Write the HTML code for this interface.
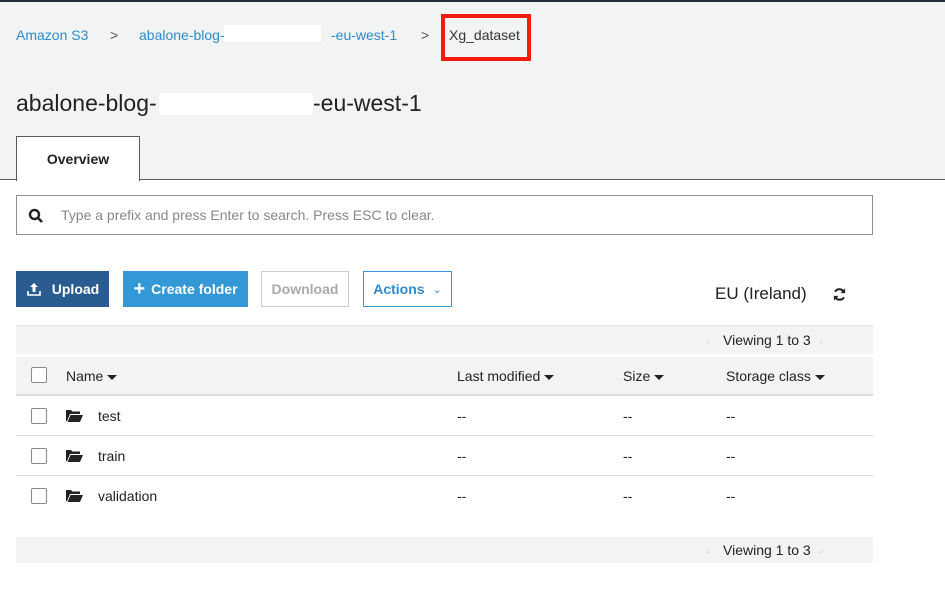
<!DOCTYPE html>
<html><head><meta charset="utf-8"><style>
*{margin:0;padding:0;box-sizing:border-box}
body{width:945px;height:613px;background:#fff;font-family:"Liberation Sans",Arial,sans-serif;position:relative;overflow:hidden;color:#222}
.a{position:absolute}
.hdr{left:0;top:0;width:945px;height:180px;background:#f2f3f3;border-top:2px solid #232f3e;border-bottom:1px solid #545b64}
.bc{top:27px;font-size:14px;color:#2e8ccb}
.white{background:#fff}
.btn{height:36px;top:271px;font-size:14px;font-weight:bold;display:flex;align-items:center;justify-content:center}
.cb{width:16px;height:16px;border:1px solid #8a8a8a;border-radius:2px;background:#fff;left:31px}
.txt{font-size:14px;color:#222}
.hrow{font-size:14px;color:#222}
.tri{display:inline-block;width:0;height:0;border-left:5px solid transparent;border-right:5px solid transparent;border-top:5px solid #222;vertical-align:middle;margin-left:4px}
.line{left:16px;width:857px;height:1px;background:#ddd}
</style></head><body>
<div class="a hdr"></div>
<div class="a bc" style="left:16px">Amazon S3</div>
<div class="a bc" style="left:110px;color:#555">&gt;</div>
<div class="a bc" style="left:139px">abalone-blog-</div>
<div class="a white" style="left:224px;top:25px;width:97px;height:17px"></div>
<div class="a bc" style="left:331px">-eu-west-1</div>
<div class="a bc" style="left:421px;color:#555">&gt;</div>
<div class="a bc" style="left:449px;color:#333">Xg_dataset</div>
<div class="a" style="left:441px;top:14px;width:90px;height:47px;border:4px solid #f21b0c"></div>
<div class="a" style="left:16px;top:90px;font-size:23px;color:#222">abalone-blog-</div>
<div class="a white" style="left:159px;top:93px;width:154px;height:22px"></div>
<div class="a" style="left:313px;top:90px;font-size:23px;color:#222">-eu-west-1</div>
<div class="a" style="left:16px;top:136px;width:124px;height:45px;background:#fff;border:1px solid #545b64;border-bottom:none;font-size:14px;font-weight:bold;text-align:center;line-height:44px">Overview</div>
<div class="a" style="left:16px;top:195px;width:857px;height:40px;border:1px solid #8d9096;background:#fff"></div>
<svg class="a" style="left:28px;top:208px" width="16" height="16" viewBox="0 0 16 16"><circle cx="6.5" cy="6.5" r="4.5" fill="none" stroke="#222" stroke-width="2.4"/><path d="M10 10l4 4" stroke="#222" stroke-width="2.6"/></svg>
<div class="a" style="left:61px;top:207px;font-size:14px;color:#888">Type a prefix and press Enter to search. Press ESC to clear.</div>
<div class="a btn" style="left:16px;width:93px;background:#2b5c91;color:#fff"><svg width="16" height="16" viewBox="0 0 16 16" style="margin-right:10px"><path d="M8 2l-4 4h2.5v5h3V6H12z" fill="#fff"/><path d="M2 10v4h12v-4" fill="none" stroke="#fff" stroke-width="1.6"/></svg>Upload</div>
<div class="a btn" style="left:123px;width:125px;background:#3399d6;color:#fff"><span style="font-size:20px;margin-right:6px;font-weight:bold">+</span>Create folder</div>
<div class="a btn" style="left:261px;width:88px;border:1px solid #ccc;color:#aaa;background:#fff">Download</div>
<div class="a btn" style="left:363px;width:89px;border:1px solid #3199d6;color:#2e8ccb;background:#fff">Actions<span style="font-weight:normal;font-size:11px;margin-left:8px">&#8964;</span></div>
<div class="a" style="left:715px;top:284px;font-size:17px;color:#222">EU (Ireland)</div>
<svg class="a" style="left:832px;top:287px" width="15" height="15" viewBox="0 0 16 16"><path d="M13 6A5.5 5.5 0 0 0 3.2 5M3 10a5.5 5.5 0 0 0 9.8 1" fill="none" stroke="#222" stroke-width="2.2"/><path d="M14 1.5v5h-5z M2 14.5v-5h5z" fill="#222"/></svg>
<div class="a" style="left:16px;top:325px;width:857px;height:29px;background:#f2f3f3;border-top:1px solid #e0e0e0"></div>
<div class="a" style="left:706px;top:332px;font-size:14px;color:#ddd">&lsaquo;</div>
<div class="a txt" style="left:723px;top:332px">Viewing 1 to 3</div>
<div class="a" style="left:819px;top:332px;font-size:14px;color:#ddd">&rsaquo;</div>
<div class="a" style="left:16px;top:357px;width:857px;height:39px;background:#f2f3f3;border-bottom:2px solid #ddd"></div>
<div class="a cb" style="top:367px"></div>
<div class="a hrow" style="left:66px;top:368px">Name<span class="tri"></span></div>
<div class="a hrow" style="left:457px;top:368px">Last modified<span class="tri"></span></div>
<div class="a hrow" style="left:623px;top:368px">Size<span class="tri"></span></div>
<div class="a hrow" style="left:726px;top:368px">Storage class<span class="tri"></span></div>

<div class="a cb" style="top:408px"></div>
<svg class="a" style="left:66px;top:410px" width="17" height="12" viewBox="0 0 17 12"><path d="M0 0h5l1.5 1.5H14V4H4L1 11H0z" fill="#222"/><path d="M4.5 5H17l-3 7H1.5z" fill="#222"/></svg>
<div class="a txt" style="left:98px;top:408px">test</div>
<div class="a txt" style="left:457px;top:408px">--</div><div class="a txt" style="left:623px;top:408px">--</div><div class="a txt" style="left:726px;top:408px">--</div>
<div class="a line" style="top:435px"></div>

<div class="a cb" style="top:448px"></div>
<svg class="a" style="left:66px;top:450px" width="17" height="12" viewBox="0 0 17 12"><path d="M0 0h5l1.5 1.5H14V4H4L1 11H0z" fill="#222"/><path d="M4.5 5H17l-3 7H1.5z" fill="#222"/></svg>
<div class="a txt" style="left:98px;top:448px">train</div>
<div class="a txt" style="left:457px;top:448px">--</div><div class="a txt" style="left:623px;top:448px">--</div><div class="a txt" style="left:726px;top:448px">--</div>
<div class="a line" style="top:475px"></div>

<div class="a cb" style="top:488px"></div>
<svg class="a" style="left:66px;top:490px" width="17" height="12" viewBox="0 0 17 12"><path d="M0 0h5l1.5 1.5H14V4H4L1 11H0z" fill="#222"/><path d="M4.5 5H17l-3 7H1.5z" fill="#222"/></svg>
<div class="a txt" style="left:98px;top:488px">validation</div>
<div class="a txt" style="left:457px;top:488px">--</div><div class="a txt" style="left:623px;top:488px">--</div><div class="a txt" style="left:726px;top:488px">--</div>

<div class="a" style="left:16px;top:537px;width:857px;height:26px;background:#f2f3f3"></div>
<div class="a" style="left:706px;top:542px;font-size:14px;color:#ddd">&lsaquo;</div>
<div class="a txt" style="left:723px;top:542px">Viewing 1 to 3</div>
<div class="a" style="left:819px;top:542px;font-size:14px;color:#ddd">&rsaquo;</div>
</body></html>
